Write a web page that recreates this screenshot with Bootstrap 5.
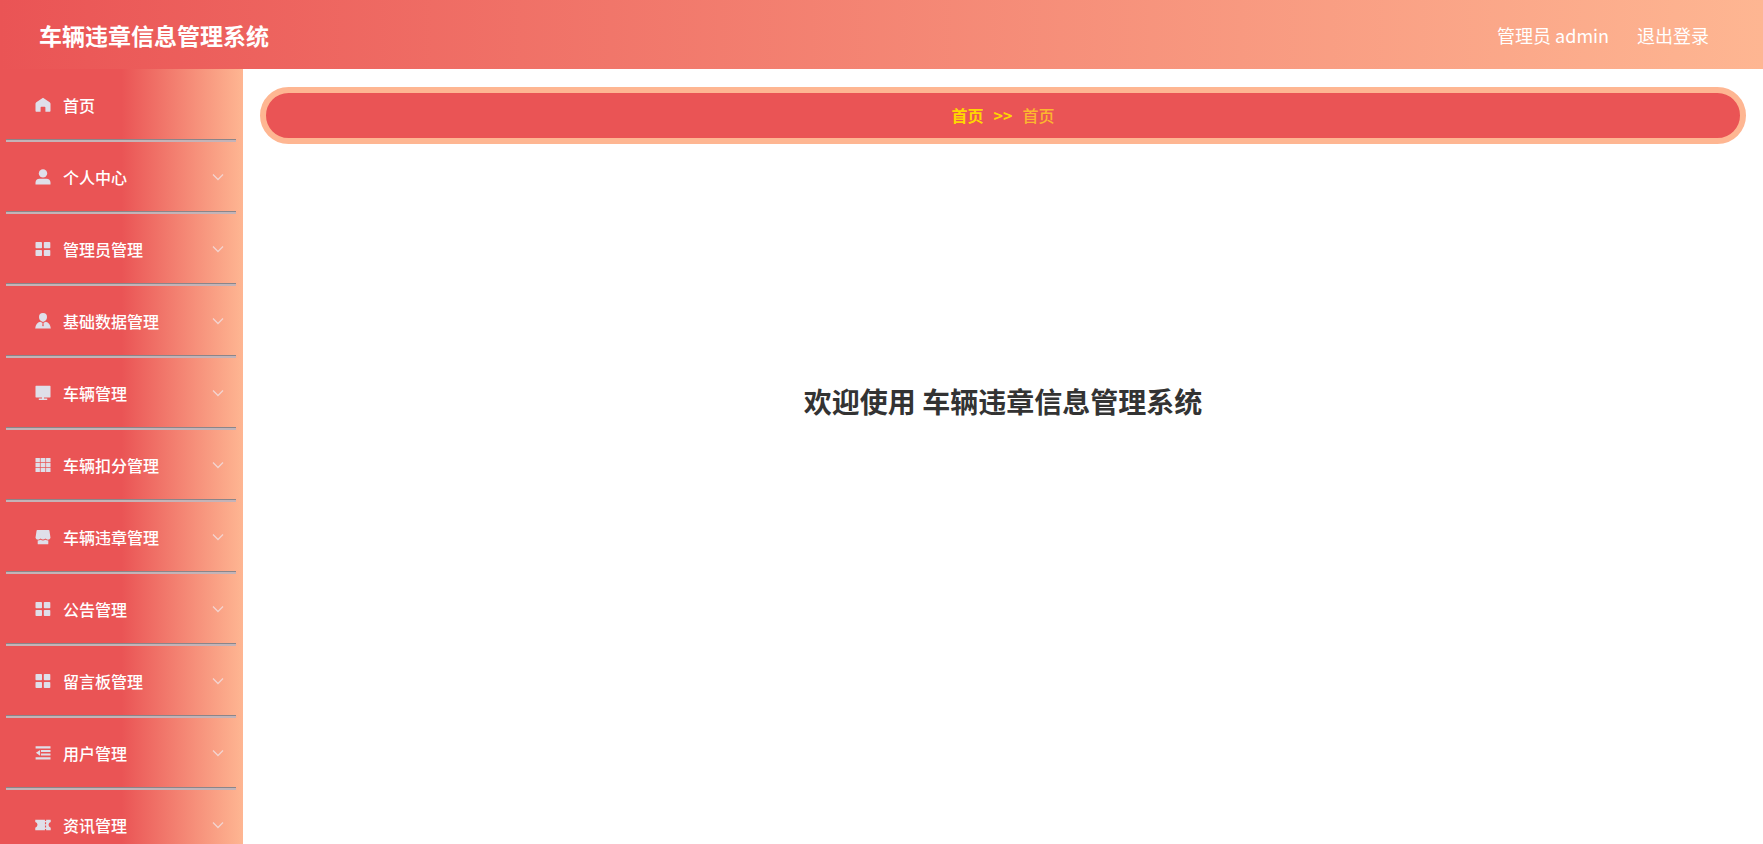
<!DOCTYPE html>
<html lang="zh-CN">
<head>
<meta charset="utf-8">
<meta name="viewport" content="width=device-width, initial-scale=1">
<title>车辆违章信息管理系统</title>
<link href="https://cdn.jsdelivr.net/npm/bootstrap@5.3.0/dist/css/bootstrap.min.css" rel="stylesheet">
<style>
:root { --red: #ea5455; --peach: #feb692; }
body { font-family: "Noto Sans CJK SC", sans-serif; color: #333; }
.topbar { min-height: 69px; padding: 1px 54px 0 39px; background: linear-gradient(to right, var(--red) 0%, var(--peach) 100%); }
.topbar a { color: #fff; font-size: 18px; }
.topbar .site-title { font-size: 23px; font-weight: 700; }
.side { width: 243px; padding: 1px 7px 0 6px; overflow-y: auto; scrollbar-width: none; background: linear-gradient(to right, var(--red) 50%, var(--peach) 100%); }
.side::-webkit-scrollbar { display: none; }
.side .menu-link { height: 72px; padding: 0 12px 0 29px; gap: 12px; border: 0; border-bottom: 2px solid #c4b3b7; box-shadow: inset 0 -1px #8b8589; border-radius: 0; background: none; color: #fff; font-size: 16px; font-weight: 500; text-align: left; }
.side svg { fill: #dfdfe9; flex: none; }
.side .arrow { fill: none; stroke: #f3d4d0; stroke-width: 1.3; }
.crumbs { min-height: 57px; padding-bottom: 2px; border: 6px solid var(--peach); background: var(--red); font-size: 16px; color: #ffd700; gap: 10px; }
.crumbs a, .crumbs .sep { color: #ffd700; font-weight: 700; }
.crumbs .here { color: #fcb72e; font-weight: 500; }
.content { padding: 18px 17px; }
.welcome { margin-top: 236px; font-size: 28px; line-height: 42px; font-weight: 700; color: #333; }
</style>
</head>
<body>
<svg class="d-none" xmlns="http://www.w3.org/2000/svg">
  <symbol id="i-home" viewBox="0 0 16 16"><path d="M8 .7 1.300 5.300C.8 5.700.5 6.200.5 6.800V13.800c0 .6.4 1 1 1h4.100v-4.300c0-.4.3-.7.7-.7h3.400c.4 0 .7.3.7.7v4.300h4.100c.6 0 1-.4 1-1V6.800c0-.6-.3-1.100-.8-1.500z"/></symbol>
  <symbol id="i-user" viewBox="0 0 16 16"><circle cx="8" cy="4.400" r="4.200"/><path d="M.5 15.500v-1.700c0-2.500 1.600-4 4-4h7c2.400 0 4 1.500 4 4v1.700z"/></symbol>
  <symbol id="i-grid" viewBox="0 0 16 16"><rect x=".5" y="1" width="6.500" height="6.200" rx=".8"/><rect x="8.800" y="1" width="6.500" height="6.200" rx=".8"/><rect x=".5" y="9" width="6.500" height="6" rx=".8"/><rect x="8.800" y="9" width="6.500" height="6" rx=".8"/></symbol>
  <symbol id="i-person" viewBox="0 0 16 16"><path d="M8 .1a4 4 0 0 1 4 4c0 1.800-.8 3.200-2 4l-2 .8-2-.8c-1.200-.8-2-2.200-2-4a4 4 0 0 1 4-4z"/><path fill-rule="evenodd" d="M5.200 8.700 8 10l2.800-1.300c2.900.7 4.700 3.300 5 6.800H.2c.3-3.500 2.100-6.100 5-6.800zM7.200 9.800l.4.900-.4 1.900.8.900.8-.9-.4-1.900.4-.9-.8.300z"/></symbol>
  <symbol id="i-screen" viewBox="0 0 16 16"><path d="M1 .8h14c.3 0 .5.200.5.500v10.600c0 .3-.2.500-.5.500H1c-.3 0-.5-.2-.5-.5V1.300C.5 1 .7.800 1 .8zM7 12h2v1.500h3.200v1.400H3.800v-1.400H7z"/></symbol>
  <symbol id="i-cells" viewBox="0 0 16 16"><path d="M.5 1h4.400v4H.5zM5.600 1h4.800v4H5.600zM11.100 1h4.400v4h-4.400zM.5 5.700h4.400v4.600H.5zM5.600 5.700h4.800v4.600H5.600zM11.100 5.700h4.400v4.600h-4.400zM.5 11h4.400v4H.5zM5.600 11h4.800v4H5.600zM11.100 11h4.400v4h-4.400z"/></symbol>
  <symbol id="i-shop" viewBox="0 0 16 16"><path d="M2.300 1h11.400c.4 0 .6.200.7.500l1.100 7.300c-.4 1.200-1.300 1.900-2.600 1.900-1 0-1.900-.4-2.500-1.100-.6.600-1.400 1-2.400 1s-1.800-.4-2.400-1c-.6.700-1.500 1.100-2.500 1.100C1.800 10.700.9 10 .5 8.800L1.600 1.500c.1-.3.300-.5.700-.5z"/><path d="M2.700 11.500c1.200 0 2.200-.2 2.900-.8 1.500.9 3.300.9 4.800 0 .7.600 1.700.8 2.900.8v3.200c0 .4-.2.600-.6.600H3.300c-.4 0-.6-.2-.6-.6z"/></symbol>
  <symbol id="i-fold" viewBox="0 0 16 16"><path d="M.6 1.200h14.900v2.200H.6zM6 5h9.500v2H6zM6 8.600h9.500v2H6zM.6 12.200h14.900v2.200H.6zM.9 7.800l4.200-2.900v5.800z"/></symbol>
  <symbol id="i-ticket" viewBox="0 0 18 16"><path d="M.3 2h10.900v1.500h1.300V2h5.200v2.600a3.300 3.300 0 0 0 0 6.400v3h-5.200v-1.500h-1.300V14H.3v-3a3.300 3.300 0 0 0 0-6.400zM11.200 5v2.200h1.300V5zM11.200 8.700v2.200h1.300V8.700z" fill-rule="evenodd"/></symbol>
  <symbol id="i-down" viewBox="0 0 12 12"><path d="M1 3.500 6 8.500l5-5"/></symbol>
</svg>
<div class="vh-100 d-flex flex-column overflow-hidden">
  <header class="topbar d-flex align-items-center justify-content-between">
    <a class="site-title text-decoration-none" href="#">车辆违章信息管理系统</a>
    <nav class="d-flex gap-4" aria-label="账户">
      <a class="text-decoration-none me-1" href="#">管理员 admin</a>
      <a class="text-decoration-none" href="#">退出登录</a>
    </nav>
  </header>
  <div class="d-flex flex-grow-1 overflow-hidden">
    <nav class="side flex-shrink-0" aria-label="主菜单">
      <button type="button" class="menu-link w-100 d-flex align-items-center"><svg width="16" height="16"><use href="#i-home"/></svg>首页</button>
      <button type="button" class="menu-link w-100 d-flex align-items-center"><svg width="16" height="16"><use href="#i-user"/></svg>个人中心<svg class="arrow ms-auto" width="12" height="12"><use href="#i-down"/></svg></button>
      <button type="button" class="menu-link w-100 d-flex align-items-center"><svg width="16" height="16"><use href="#i-grid"/></svg>管理员管理<svg class="arrow ms-auto" width="12" height="12"><use href="#i-down"/></svg></button>
      <button type="button" class="menu-link w-100 d-flex align-items-center"><svg width="16" height="16"><use href="#i-person"/></svg>基础数据管理<svg class="arrow ms-auto" width="12" height="12"><use href="#i-down"/></svg></button>
      <button type="button" class="menu-link w-100 d-flex align-items-center"><svg width="16" height="16"><use href="#i-screen"/></svg>车辆管理<svg class="arrow ms-auto" width="12" height="12"><use href="#i-down"/></svg></button>
      <button type="button" class="menu-link w-100 d-flex align-items-center"><svg width="16" height="16"><use href="#i-cells"/></svg>车辆扣分管理<svg class="arrow ms-auto" width="12" height="12"><use href="#i-down"/></svg></button>
      <button type="button" class="menu-link w-100 d-flex align-items-center"><svg width="16" height="16"><use href="#i-shop"/></svg>车辆违章管理<svg class="arrow ms-auto" width="12" height="12"><use href="#i-down"/></svg></button>
      <button type="button" class="menu-link w-100 d-flex align-items-center"><svg width="16" height="16"><use href="#i-grid"/></svg>公告管理<svg class="arrow ms-auto" width="12" height="12"><use href="#i-down"/></svg></button>
      <button type="button" class="menu-link w-100 d-flex align-items-center"><svg width="16" height="16"><use href="#i-grid"/></svg>留言板管理<svg class="arrow ms-auto" width="12" height="12"><use href="#i-down"/></svg></button>
      <button type="button" class="menu-link w-100 d-flex align-items-center"><svg width="16" height="16"><use href="#i-fold"/></svg>用户管理<svg class="arrow ms-auto" width="12" height="12"><use href="#i-down"/></svg></button>
      <button type="button" class="menu-link w-100 d-flex align-items-center"><svg width="16" height="16"><use href="#i-ticket"/></svg>资讯管理<svg class="arrow ms-auto" width="12" height="12"><use href="#i-down"/></svg></button>
    </nav>
    <main class="content flex-grow-1 overflow-auto">
      <nav class="crumbs rounded-pill d-flex align-items-center justify-content-center" aria-label="面包屑">
        <a class="text-decoration-none" href="#">首页</a><span class="sep">&gt;&gt;</span><span class="here" aria-current="page">首页</span>
      </nav>
      <h1 class="welcome text-center mb-0">欢迎使用 车辆违章信息管理系统</h1>
    </main>
  </div>
</div>
<script src="https://cdn.jsdelivr.net/npm/bootstrap@5.3.0/dist/js/bootstrap.bundle.min.js"></script>
</body>
</html>
